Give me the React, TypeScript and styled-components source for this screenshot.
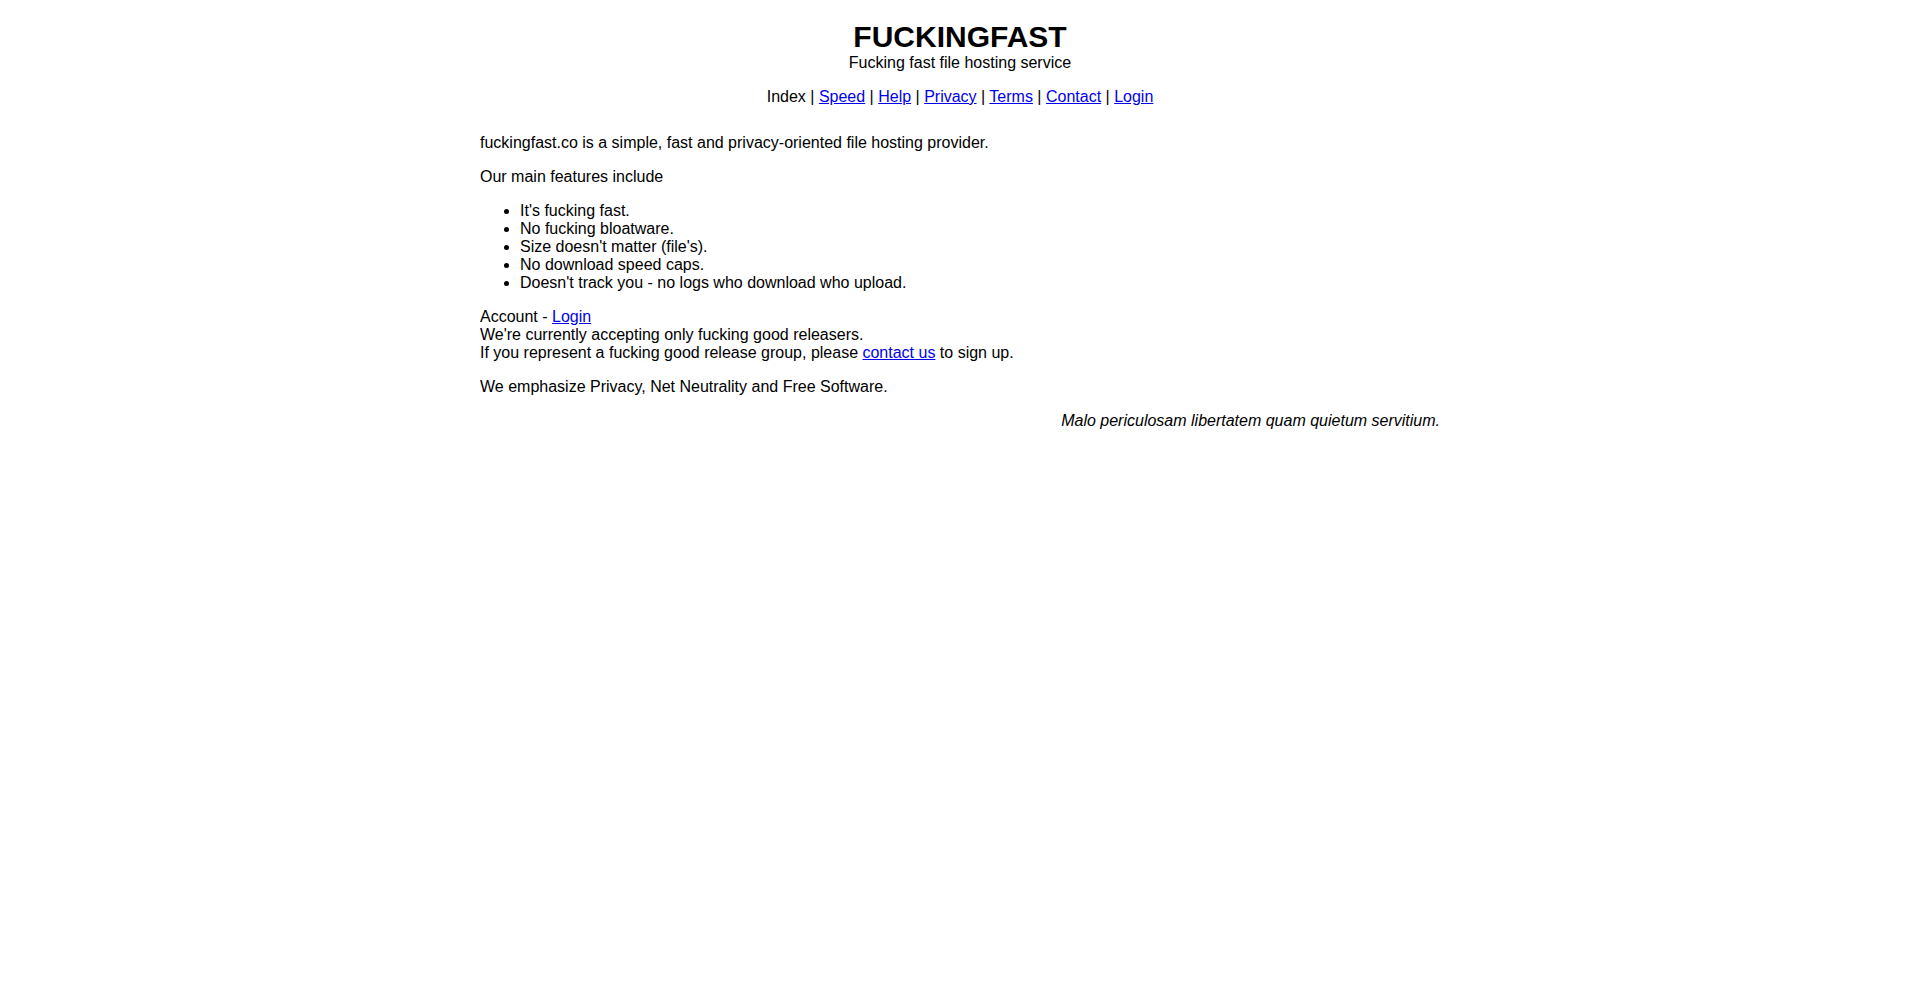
import React from "react";
import styled, { createGlobalStyle } from "styled-components";

const GlobalStyle = createGlobalStyle`
  body {
    margin: 0;
    background: #fff;
    color: #000;
    font-family: "Liberation Sans", Arial, sans-serif;
    font-size: 16px;
  }
  a {
    color: #0000ee;
  }
`;

const Page = styled.div`
  max-width: 960px;
  margin: 0 auto;
  padding-top: 20px;
`;

const Header = styled.header`
  text-align: center;
`;

const Title = styled.h1`
  margin: 0;
  font-size: 30px;
  font-weight: bold;
`;

const Subtitle = styled.div`
  margin: 0;
`;

const Nav = styled.nav`
  margin: 16px 0 0 0;
`;

const Main = styled.main`
  padding-top: 12px;
`;

const P = styled.p<{ align?: string; italic?: boolean }>`
  margin: 16px 0;
  text-align: ${(p) => p.align || "left"};
  font-style: ${(p) => (p.italic ? "italic" : "normal")};
`;

const List = styled.ul`
  margin: 16px 0;
  padding-left: 40px;
`;

const navLinks = ["Speed", "Help", "Privacy", "Terms", "Contact", "Login"];

const features = [
  "It's fucking fast.",
  "No fucking bloatware.",
  "Size doesn't matter (file's).",
  "No download speed caps.",
  "Doesn't track you - no logs who download who upload.",
];

const App: React.FunctionComponent<{}> = () => {
  return (
    <Page>
      <GlobalStyle />
      <Header>
        <Title>FUCKINGFAST</Title>
        <Subtitle>Fucking fast file hosting service</Subtitle>
        <Nav>
          Index
          {navLinks.map((l) => (
            <React.Fragment key={l}>
              {" | "}
              <a href="#">{l}</a>
            </React.Fragment>
          ))}
        </Nav>
      </Header>
      <Main>
        <P>fuckingfast.co is a simple, fast and privacy-oriented file hosting provider.</P>
        <P>Our main features include</P>
        <List>
          {features.map((f) => (
            <li key={f}>{f}</li>
          ))}
        </List>
        <P>
          Account - <a href="#">Login</a>
          <br />
          We're currently accepting only fucking good releasers.
          <br />
          If you represent a fucking good release group, please <a href="#">contact us</a> to sign up.
        </P>
        <P>We emphasize Privacy, Net Neutrality and Free Software.</P>
        <P align="right" italic>
          Malo periculosam libertatem quam quietum servitium.
        </P>
      </Main>
    </Page>
  );
};

export default App;
